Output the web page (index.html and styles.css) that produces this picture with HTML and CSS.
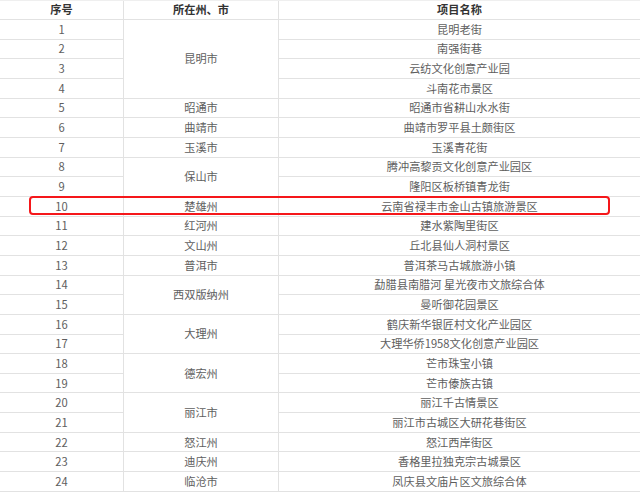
FILE: index.html
```html
<!DOCTYPE html>
<html lang="zh">
<head>
<meta charset="utf-8">
<link rel="stylesheet" href="styles.css">
</head>
<body>
<div class="wrap">
  <div class="grid">
    <div class="c h">序号</div><div class="c h">所在州、市</div><div class="c h">项目名称</div>
    <div class="c">1</div><div class="c s4">昆明市</div><div class="c">昆明老街</div>
    <div class="c">2</div><div class="c">南强街巷</div>
    <div class="c">3</div><div class="c">云纺文化创意产业园</div>
    <div class="c">4</div><div class="c">斗南花市景区</div>
    <div class="c">5</div><div class="c">昭通市</div><div class="c">昭通市省耕山水水街</div>
    <div class="c">6</div><div class="c">曲靖市</div><div class="c">曲靖市罗平县土颇街区</div>
    <div class="c">7</div><div class="c">玉溪市</div><div class="c">玉溪青花街</div>
    <div class="c">8</div><div class="c s2">保山市</div><div class="c">腾冲高黎贡文化创意产业园区</div>
    <div class="c">9</div><div class="c">隆阳区板桥镇青龙街</div>
    <div class="c">10</div><div class="c">楚雄州</div><div class="c">云南省禄丰市金山古镇旅游景区</div>
    <div class="c">11</div><div class="c">红河州</div><div class="c">建水紫陶里街区</div>
    <div class="c">12</div><div class="c">文山州</div><div class="c">丘北县仙人洞村景区</div>
    <div class="c">13</div><div class="c">普洱市</div><div class="c">普洱茶马古城旅游小镇</div>
    <div class="c">14</div><div class="c s2">西双版纳州</div><div class="c">勐腊县南腊河 星光夜市文旅综合体</div>
    <div class="c">15</div><div class="c">曼听御花园景区</div>
    <div class="c">16</div><div class="c s2">大理州</div><div class="c">鹤庆新华银匠村文化产业园区</div>
    <div class="c">17</div><div class="c">大理华侨1958文化创意产业园区</div>
    <div class="c">18</div><div class="c s2">德宏州</div><div class="c">芒市珠宝小镇</div>
    <div class="c">19</div><div class="c">芒市傣族古镇</div>
    <div class="c">20</div><div class="c s2">丽江市</div><div class="c">丽江千古情景区</div>
    <div class="c">21</div><div class="c">丽江市古城区大研花巷街区</div>
    <div class="c">22</div><div class="c">怒江州</div><div class="c">怒江西岸街区</div>
    <div class="c">23</div><div class="c">迪庆州</div><div class="c">香格里拉独克宗古城景区</div>
    <div class="c">24</div><div class="c">临沧市</div><div class="c">凤庆县文庙片区文旅综合体</div>
  </div>
  <div class="mark"></div>
</div>
</body>
</html>
```
FILE: styles.css
```css
html, body {
  margin: 0;
  padding: 0;
  background: #fff;
}
.wrap {
  position: relative;
  width: 640px;
  height: 493px;
  overflow: hidden;
}
.grid {
  display: grid;
  grid-template-columns: 123px 154px 361px;
  grid-template-rows: 18px;
  grid-auto-rows: 18.67px;
  gap: 1px;
  background: #e2e2e2;
  border-top: 1px solid #efefef;
  border-bottom: 1px solid #e2e2e2;
  width: 640px;
  font-family: "Noto Sans CJK SC", "Microsoft YaHei", sans-serif;
  font-size: 11.2px;
  color: #5e5e5e;
}
.c {
  background: #fff;
  display: flex;
  align-items: center;
  justify-content: center;
  white-space: nowrap;
  line-height: 1;
}
.h {
  font-weight: bold;
  color: #333;
}
.s4 { grid-row: span 4; }
.s2 { grid-row: span 2; }
.mark {
  position: absolute;
  left: 29px;
  top: 196px;
  width: 581px;
  height: 19px;
  box-sizing: border-box;
  border: 2px solid #f5171a;
  border-radius: 4px;
}
```
